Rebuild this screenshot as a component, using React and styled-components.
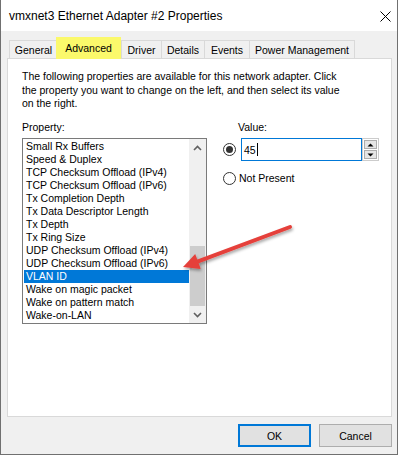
import React from 'react';
import styled, { createGlobalStyle } from 'styled-components';

const GlobalStyle = createGlobalStyle`
  html, body {
    margin: 0;
    padding: 0;
    background: #fff;
  }
`;

const Window = styled.div`
  position: relative;
  width: 398px;
  height: 455px;
  box-sizing: border-box;
  border: 1px solid #707070;
  border-top: none;
  background: #f0f0f0;
  display: flex;
  flex-direction: column;
  font-family: "Liberation Sans", Arial, sans-serif;
  font-size: 10.5px;
  color: #000;
`;

const TitleBar = styled.div`
  flex: none;
  height: 31px;
  background: #fff;
  display: flex;
  align-items: center;
  justify-content: space-between;
  padding-left: 8px;
`;

const Title = styled.div`
  font-size: 12px;
  padding-top: 1px;
`;

const CloseIcon = styled.svg`
  margin-right: 6px;
  margin-top: 1px;
`;

const Body = styled.div`
  flex: 1;
  display: flex;
  flex-direction: column;
  padding: 6px 5px 0 6px;
`;

const TabStrip = styled.div`
  display: flex;
  align-items: flex-end;
  height: 21px;
  padding-left: 2px;
`;

const Tab = styled.div`
  position: relative;
  z-index: ${p => (p.$active ? 1 : 0)};
  box-sizing: border-box;
  width: ${p => p.$w}px;
  height: ${p => (p.$active ? 22 : 18)}px;
  margin-left: ${p => p.$ml}px;
  margin-bottom: ${p => (p.$active ? -1 : 0)}px;
  padding-top: ${p => (p.$active ? 2 : 1)}px;
  border: 1px solid ${p => (p.$active ? '#fbf96b' : '#d9d9d9')};
  border-bottom: none;
  background: ${p => (p.$active ? '#fbf96b' : '#f0f0f0')};
  line-height: 16px;
  text-align: center;
  white-space: nowrap;
`;

const Panel = styled.div`
  box-sizing: border-box;
  height: 359px;
  border: 1px solid #d9d9d9;
  background: #fff;
  padding: 11px 14px 0 14px;
`;

const Description = styled.p`
  margin: 0;
  line-height: 13.5px;
  white-space: nowrap;
`;

const Columns = styled.div`
  display: flex;
  margin-top: 10.5px;
`;

const LeftColumn = styled.div`
  width: 185px;
`;

const RightColumn = styled.div`
  margin-left: 16px;
`;

const FieldLabel = styled.div`
  line-height: 13px;
  margin-bottom: 4px;
  margin-left: ${p => p.$indent || 0}px;
`;

const ListBox = styled.div`
  box-sizing: border-box;
  width: 185px;
  height: 186px;
  border: 1px solid #7a7a7a;
  background: #fff;
  display: flex;
`;

const ListItems = styled.div`
  flex: 1;
  padding: 1px 0 0 1px;
  overflow: hidden;
`;

const ListRow = styled.div`
  height: 13px;
  line-height: 13px;
  padding-left: 2px;
  white-space: nowrap;
  background: ${p => (p.$selected ? '#0078d7' : 'transparent')};
  color: ${p => (p.$selected ? '#fff' : '#000')};
`;

const ScrollBar = styled.div`
  width: 17px;
  background: #f0f0f0;
  display: flex;
  flex-direction: column;
`;

const ScrollArrow = styled.div`
  flex: none;
  height: 17px;
  display: flex;
  align-items: center;
  justify-content: center;
`;

const ScrollTrack = styled.div`
  flex: 1;
  display: flex;
  flex-direction: column;
`;

const ScrollThumb = styled.div`
  margin: auto 1px 0 1px;
  height: 60px;
  background: #cdcdcd;
`;

const OptionRow = styled.div`
  display: flex;
  align-items: center;
  height: ${p => p.$h}px;
  margin-top: ${p => p.$mt || 0}px;
`;

const Radio = styled.span`
  flex: none;
  box-sizing: border-box;
  width: 13px;
  height: 13px;
  border: 1px solid #333;
  border-radius: 50%;
  background: #fff;
  display: flex;
  align-items: center;
  justify-content: center;

  &::after {
    content: '';
    display: ${p => (p.$checked ? 'block' : 'none')};
    width: 7px;
    height: 7px;
    border-radius: 50%;
    background: #333;
  }
`;

const OptionText = styled.span`
  margin-left: 3px;
  line-height: 13px;
`;

const ValueBox = styled.div`
  box-sizing: border-box;
  width: 121px;
  height: 23px;
  margin-left: 5px;
  border: 1px solid #0078d7;
  background: #fff;
  padding-left: 2px;
  display: flex;
  align-items: center;
`;

const Caret = styled.span`
  display: inline-block;
  width: 1px;
  height: 13px;
  margin-left: 1px;
  background: #000;
`;

const Spinner = styled.div`
  box-sizing: border-box;
  width: 17px;
  height: 23px;
  border: 1px solid #cccccc;
  padding: 1px;
  display: flex;
  flex-direction: column;
  gap: 1px;
`;

const SpinButton = styled.div`
  flex: 1;
  box-sizing: border-box;
  border: 1px solid #adadad;
  background: #e5e5e5;
  display: flex;
  align-items: center;
  justify-content: center;
`;

const Footer = styled.div`
  display: flex;
  justify-content: flex-end;
  gap: 8px;
  padding-top: 7px;
`;

const Button = styled.div`
  box-sizing: border-box;
  width: 73px;
  height: 23px;
  background: #e1e1e1;
  border: ${p => (p.$primary ? '2px solid #0078d7' : '1px solid #adadad')};
  display: flex;
  align-items: center;
  justify-content: center;
`;

const Annotation = styled.svg`
  position: absolute;
  left: 0;
  top: 0;
  pointer-events: none;
`;

const tabs = [
  { label: 'General', w: 49, ml: 0 },
  { label: 'Advanced', w: 65, ml: -2, active: true },
  { label: 'Driver', w: 41, ml: 0 },
  { label: 'Details', w: 44, ml: -1 },
  { label: 'Events', w: 46, ml: -1 },
  { label: 'Power Management', w: 106, ml: -1 },
];

const properties = [
  'Small Rx Buffers',
  'Speed & Duplex',
  'TCP Checksum Offload (IPv4)',
  'TCP Checksum Offload (IPv6)',
  'Tx Completion Depth',
  'Tx Data Descriptor Length',
  'Tx Depth',
  'Tx Ring Size',
  'UDP Checksum Offload (IPv4)',
  'UDP Checksum Offload (IPv6)',
  'VLAN ID',
  'Wake on magic packet',
  'Wake on pattern match',
  'Wake-on-LAN',
];

const Chevron = ({ up }) => (
  <svg width="9" height="6" viewBox="0 0 9 6">
    <path
      d={up ? 'M1 5 L4.5 1.5 L8 5' : 'M1 1 L4.5 4.5 L8 1'}
      fill="none"
      stroke="#606060"
      strokeWidth="1.6"
    />
  </svg>
);

const SpinGlyph = ({ up }) => (
  <svg width="7" height="4" viewBox="0 0 7 4">
    <path d={up ? 'M0.5 3.5 L3.5 0.5 L6.5 3.5 Z' : 'M0.5 0.5 L6.5 0.5 L3.5 3.5 Z'} fill="#000" />
  </svg>
);

// red pointer drawn over the dialog, in window coordinates
const tip = [182, 267];
const tail = [289, 227];
const dx = tip[0] - tail[0];
const dy = tip[1] - tail[1];
const len = Math.hypot(dx, dy);
const ux = dx / len;
const uy = dy / len;
const base = [tip[0] - ux * 16, tip[1] - uy * 16];
const wingA = [base[0] - uy * 8, base[1] + ux * 8];
const wingB = [base[0] + uy * 8, base[1] - ux * 8];

const App = () => (
  <>
    <GlobalStyle />
    <Window>
      <TitleBar>
        <Title>vmxnet3 Ethernet Adapter #2 Properties</Title>
        <CloseIcon width="11" height="11" viewBox="0 0 11 11">
          <path d="M0.5 0.5 L10.5 10.5 M10.5 0.5 L0.5 10.5" stroke="#000" strokeWidth="1" />
        </CloseIcon>
      </TitleBar>
      <Body>
        <TabStrip>
          {tabs.map(t => (
            <Tab key={t.label} $w={t.w} $ml={t.ml} $active={t.active}>
              {t.label}
            </Tab>
          ))}
        </TabStrip>
        <Panel>
          <Description>
            The following properties are available for this network adapter. Click
            <br />
            the property you want to change on the left, and then select its value
            <br />
            on the right.
          </Description>
          <Columns>
            <LeftColumn>
              <FieldLabel>Property:</FieldLabel>
              <ListBox>
                <ListItems>
                  {properties.map(p => (
                    <ListRow key={p} $selected={p === 'VLAN ID'}>{p}</ListRow>
                  ))}
                </ListItems>
                <ScrollBar>
                  <ScrollArrow><Chevron up /></ScrollArrow>
                  <ScrollTrack><ScrollThumb /></ScrollTrack>
                  <ScrollArrow><Chevron /></ScrollArrow>
                </ScrollBar>
              </ListBox>
            </LeftColumn>
            <RightColumn>
              <FieldLabel $indent={15}>Value:</FieldLabel>
              <OptionRow $h={23}>
                <Radio $checked />
                <ValueBox>45<Caret /></ValueBox>
                <Spinner>
                  <SpinButton><SpinGlyph up /></SpinButton>
                  <SpinButton><SpinGlyph /></SpinButton>
                </Spinner>
              </OptionRow>
              <OptionRow $h={13} $mt={11}>
                <Radio />
                <OptionText>Not Present</OptionText>
              </OptionRow>
            </RightColumn>
          </Columns>
        </Panel>
        <Footer>
          <Button $primary>OK</Button>
          <Button>Cancel</Button>
        </Footer>
      </Body>
      <Annotation width="398" height="455" viewBox="0 0 398 455">
        <defs>
          <filter id="arrowShadow" x="-20%" y="-20%" width="140%" height="160%">
            <feDropShadow dx="1" dy="2" stdDeviation="1.5" floodColor="#000" floodOpacity="0.35" />
          </filter>
        </defs>
        <g filter="url(#arrowShadow)">
          <line
            x1={tail[0]}
            y1={tail[1]}
            x2={base[0] + ux * 2}
            y2={base[1] + uy * 2}
            stroke="#e5403a"
            strokeWidth="4"
            strokeLinecap="round"
          />
          <polygon
            points={`${tip[0]},${tip[1]} ${wingA[0]},${wingA[1]} ${wingB[0]},${wingB[1]}`}
            fill="#e5403a"
          />
        </g>
      </Annotation>
    </Window>
  </>
);

export default App;
